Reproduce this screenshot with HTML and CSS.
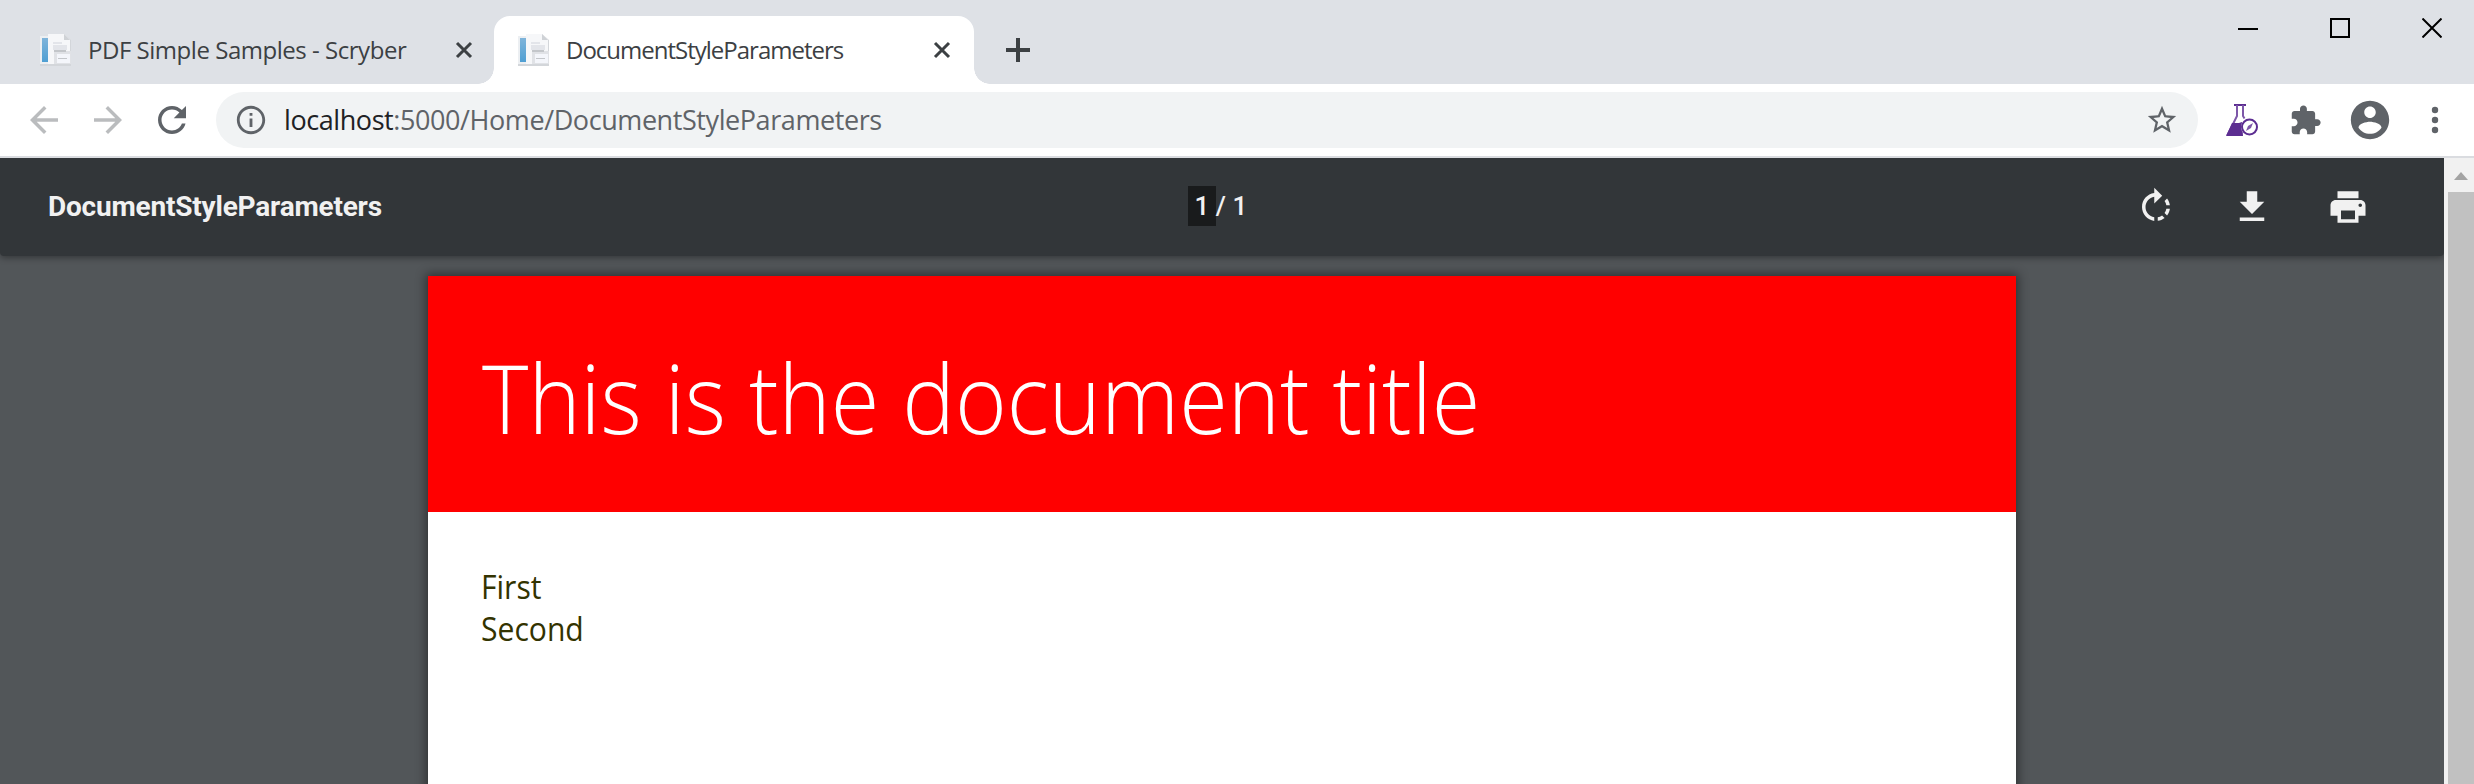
FILE: index.html
```
<!DOCTYPE html>
<html lang="en">
<head>
<meta charset="utf-8">
<title>DocumentStyleParameters</title>
<link rel="stylesheet" href="styles.css">
</head>
<body>
<svg width="0" height="0" class="defs">
  <defs>
    <linearGradient id="spine" x1="0" y1="0" x2="0" y2="1"><stop offset="0" stop-color="#7fb4da"/><stop offset="1" stop-color="#4f9fd3"/></linearGradient>
    <symbol id="favicon" viewBox="0 0 32 32">
      <path d="M0 2h8V0h16l7 6v26H0z" fill="#d3d6da"/>
      <path d="M0 2h8v28H0z" fill="#eceff2"/>
      <path d="M2 4h6v24H2z" fill="url(#spine)"/>
      <path d="M8 0h16l6 6v24H8z" fill="#f6f7f9"/>
      <path d="M24 0v6h6z" fill="#cfd2d6"/>
      <path d="M13 8h9v2h-9zM13 11h14v5H13z" fill="#e3e5ea"/>
      <path d="M14 17h17v13H14z" fill="#e0e2e6"/>
      <path d="M17 20h13v9H17z" fill="#f4f6fb"/>
      <path d="M14 16h12v2H14zM18 24h9v1h-9z" fill="#c3c6ca"/>
    </symbol>
  </defs>
</svg>
<header class="tabstrip">
  <div class="tab">
    <svg class="favicon"><use href="#favicon"/></svg>
    <span class="tab-title tab-title-first">PDF Simple Samples - Scryber</span>
    <svg class="tab-close" viewBox="0 0 18 18"><path d="M2 2l14 14M16 2L2 16"/></svg>
  </div>
  <div class="tab active">
    <svg class="favicon"><use href="#favicon"/></svg>
    <span class="tab-title tab-title-second">DocumentStyleParameters</span>
    <svg class="tab-close" viewBox="0 0 18 18"><path d="M2 2l14 14M16 2L2 16"/></svg>
  </div>
  <svg class="new-tab" viewBox="0 0 24 24"><path d="M12 0v24M0 12h24"/></svg>
  <div class="window-controls">
    <svg viewBox="0 0 20 20"><path d="M0 11h20"/></svg>
    <svg viewBox="0 0 20 20"><path d="M1 1h18v18H1z"/></svg>
    <svg viewBox="0 0 20 20"><path d="M.5.5l19 19M19.5.5l-19 19"/></svg>
  </div>
</header>
<nav class="toolbar">
  <div class="nav-buttons">
    <svg class="dim" viewBox="0 0 24 24"><path d="M20 11H7.830l5.590-5.590L12 4l-8 8 8 8 1.410-1.410L7.830 13H20v-2z"/></svg>
    <svg class="dim" viewBox="0 0 24 24"><path d="M12 4l-1.410 1.410L16.170 11H4v2h12.170l-5.580 5.590L12 20l8-8z"/></svg>
    <svg viewBox="0 0 24 24"><path d="M17.650 6.350C16.200 4.900 14.210 4 12 4c-4.420 0-7.990 3.580-7.990 8s3.570 8 7.990 8c3.730 0 6.840-2.550 7.730-6h-2.080c-.82 2.330-3.040 4-5.650 4-3.310 0-6-2.690-6-6s2.690-6 6-6c1.660 0 3.140.69 4.220 1.780L13 11h7V4l-2.350 2.350z"/></svg>
  </div>
  <div class="omnibox">
    <svg class="info" viewBox="0 0 24 24"><path d="M11 7h2v2h-2zm0 4h2v6h-2zm1-9C6.480 2 2 6.480 2 12s4.480 10 10 10 10-4.480 10-10S17.520 2 12 2zm0 18c-4.410 0-8-3.590-8-8s3.590-8 8-8 8 3.590 8 8-3.590 8-8 8z"/></svg>
    <span class="url"><span class="host">localhost</span>:5000/Home/DocumentStyleParameters</span>
    <svg class="star" viewBox="0 0 24 24"><path d="M22 9.240l-7.190-.62L12 2 9.190 8.630 2 9.240l5.460 4.730L5.820 21 12 17.270 18.180 21l-1.630-7.030L22 9.240zM12 15.400l-3.760 2.270 1-4.280-3.320-2.880 4.380-.38L12 6.100l1.710 4.040 4.380.38-3.320 2.880 1 4.280L12 15.400z"/></svg>
  </div>
  <div class="extensions">
    <svg class="flask" viewBox="0 0 32 32"><path d="M8 1h12" fill="none" stroke="#5c2d91" stroke-width="2"/><path d="M11 1v11L2 30h13M17 1v11l1.500 2.500" fill="none" stroke="#7d57a8" stroke-width="2"/><path d="M6 19h7l3-1 1 14H0z" fill="#5c2d91"/><circle cx="23.500" cy="23" r="8.500" fill="#fff"/><circle cx="23.500" cy="23" r="7.500" fill="#fff" stroke="#5c2d91" stroke-width="2"/><path d="M20 27l2-5 5-3-2 5z" fill="#7d57a8"/></svg>
    <svg class="puzzle" viewBox="0 0 24 24"><path d="M20.500 11H19V7c0-1.100-.9-2-2-2h-4V3.500C13 2.120 11.880 1 10.500 1S8 2.120 8 3.500V5H4c-1.100 0-1.990.9-1.990 2v3.800H3.500c1.490 0 2.700 1.210 2.700 2.700s-1.210 2.700-2.700 2.700H2V20c0 1.100.9 2 2 2h3.800v-1.500c0-1.490 1.210-2.700 2.700-2.700 1.490 0 2.700 1.210 2.700 2.700V22H17c1.100 0 2-.9 2-2v-4h1.500c1.380 0 2.500-1.120 2.500-2.500S21.880 11 20.500 11z"/></svg>
    <svg class="account" viewBox="0 0 24 24"><path d="M12 2C6.480 2 2 6.480 2 12s4.480 10 10 10 10-4.480 10-10S17.520 2 12 2zm0 3c1.660 0 3 1.340 3 3s-1.340 3-3 3-3-1.340-3-3 1.340-3 3-3zm0 14.200c-2.500 0-4.710-1.280-6-3.220.03-1.990 4-3.080 6-3.080 1.990 0 5.970 1.090 6 3.080-1.290 1.940-3.500 3.220-6 3.220z"/></svg>
    <svg class="menu" viewBox="0 0 8 28"><circle cx="4" cy="4" r="3.200"/><circle cx="4" cy="14" r="3.200"/><circle cx="4" cy="24" r="3.200"/></svg>
  </div>
</nav>
<main class="viewport">
  <section class="viewer">
    <div class="pdf-bar">
      <span class="pdf-name">DocumentStyleParameters</span>
      <div class="pager"><span class="page-current">1</span><span class="page-total">/ 1</span></div>
      <div class="pdf-actions">
        <svg viewBox="0 0 24 24"><path d="M15.550 5.550L11 1v3.070C7.060 4.560 4 7.920 4 12s3.050 7.440 7 7.930v-2.020c-2.840-.48-5-2.940-5-5.910s2.160-5.430 5-5.910V10l4.550-4.450zM19.930 11c-.17-1.390-.72-2.730-1.620-3.890l-1.420 1.420c.54.75.88 1.600 1.020 2.470h2.020zM13 17.900v2.020c1.390-.17 2.740-.71 3.900-1.610l-1.440-1.440c-.75.54-1.590.89-2.460 1.030zm3.890-2.420l1.420 1.410c.9-1.160 1.450-2.500 1.620-3.890h-2.020c-.14.87-.48 1.720-1.020 2.480z"/></svg>
        <svg viewBox="0 0 24 24"><path d="M19 9h-4V3H9v6H5l7 7 7-7zM5 18v2h14v-2H5z"/></svg>
        <svg viewBox="0 0 24 24"><path d="M19 8H5c-1.660 0-3 1.340-3 3v6h4v4h12v-4h4v-6c0-1.660-1.340-3-3-3zm-3 11H8v-5h8v5zm3-7c-.55 0-1-.45-1-1s.45-1 1-1 1 .45 1 1-.45 1-1 1zm-1-9H6v4h12V3z"/></svg>
      </div>
    </div>
    <article class="page">
      <h1 class="doc-title"><span>This is the document title</span></h1>
      <div class="doc-body"><p>First</p><p>Second</p></div>
    </article>
  </section>
  <aside class="scrollbar">
    <svg class="scroll-up" viewBox="0 0 14 8"><path d="M7 0l7 8H0z"/></svg>
    <div class="thumb"></div>
  </aside>
</main>
</body>
</html>
```
FILE: styles.css
```
* { box-sizing: border-box; }
body {
  margin: 0;
  width: 2474px;
  height: 784px;
  overflow: hidden;
  display: flex;
  flex-direction: column;
  font-family: "Open Sans", "Noto Sans", sans-serif;
  background: #fff;
}
svg { display: block; flex: none; }
.defs { position: absolute; }

.tabstrip {
  display: flex;
  align-items: flex-end;
  height: 84px;
  flex: none;
  background: #dee1e6;
}
.tab {
  position: relative;
  display: flex;
  align-items: center;
  width: 480px;
  height: 68px;
  padding: 0 21px 0 26px;
}
.tab:first-child { width: 494px; padding-left: 40px; }
.tab.active { background: #fff; border-radius: 16px 16px 0 0; padding: 0 23px 0 24px; }
.tab.active::before, .tab.active::after {
  content: "";
  position: absolute;
  bottom: 0;
  width: 16px;
  height: 16px;
}
.tab.active::before { left: -16px; background: radial-gradient(circle at 0 0, transparent 15.5px, #fff 16px); }
.tab.active::after { right: -16px; background: radial-gradient(circle at 100% 0, transparent 15.5px, #fff 16px); }
.favicon { width: 32px; height: 32px; }
.tab-title {
  flex: 1;
  margin-left: 16px;
  font-size: 24px;
  line-height: 32px;
  color: #3c4043;
  white-space: nowrap;
}
.tab-title-first { letter-spacing: -0.47px; }
.tab-title-second { letter-spacing: -1px; }
.tab-close { width: 18px; height: 18px; fill: none; stroke: #3c4043; stroke-width: 3; }
.new-tab { width: 24px; height: 24px; margin: 0 0 22px 32px; fill: none; stroke: #3c4043; stroke-width: 4; }
.window-controls {
  display: flex;
  gap: 72px;
  margin-left: auto;
  padding: 0 32px 46px 0;
}
.window-controls svg { width: 20px; height: 20px; fill: none; stroke: #000; stroke-width: 2; }

.toolbar {
  display: flex;
  align-items: center;
  height: 74px;
  flex: none;
  padding-left: 23px;
  border-bottom: 2px solid #dadce0;
}
.toolbar svg { fill: #5f6368; }
.nav-buttons { display: flex; gap: 22px; }
.nav-buttons svg { width: 42px; height: 42px; }
.nav-buttons .dim { fill: #babcbe; }
.omnibox {
  display: flex;
  align-items: center;
  width: 1982px;
  height: 56px;
  margin-left: 23px;
  padding: 0 19px 0 18px;
  border-radius: 28px;
  background: #f1f3f4;
}
.omnibox .info, .omnibox .star { width: 34px; height: 34px; }
.url {
  flex: 1;
  margin-left: 16px;
  font-size: 27px;
  line-height: 36px;
  letter-spacing: -0.42px;
  color: #5f6368;
}
.host { color: #202124; }
.extensions { display: flex; align-items: center; margin-left: 28px; }
.flask { width: 32px; height: 32px; }
.extensions .puzzle { width: 33px; height: 33px; margin-left: 31px; }
.extensions .account { width: 46px; height: 46px; margin-left: 25px; }
.extensions .menu { width: 8px; height: 28px; margin-left: 38px; }

.viewport { display: flex; flex: 1; min-height: 0; }
.viewer { flex: 1; overflow: hidden; background: #525659; }
.pdf-bar {
  display: grid;
  grid-template-columns: 1fr auto 1fr;
  align-items: center;
  height: 98px;
  padding: 0 57px 0 48px;
  background: #323639;
  border-radius: 0 0 4px 4px;
  box-shadow: 0 2px 6px rgba(0, 0, 0, .35);
  font-family: Roboto, sans-serif;
  font-size: 26px;
  font-weight: 500;
  line-height: 40px;
  color: #f1f1f1;
}
.pdf-name { font-size: 28px; font-weight: 700; letter-spacing: -0.2px; }
.pager { display: flex; margin-bottom: 2px; }
.page-current { width: 28px; height: 40px; text-align: center; background: #191b1c; }
.pdf-actions { display: flex; justify-content: flex-end; gap: 54px; margin-right: 18px; fill: #f1f1f1; }
.pdf-actions svg { width: 42px; height: 42px; }
.page {
  width: 1588px;
  height: 600px;
  margin: 20px 0 0 428px;
  background: #fff;
  box-shadow: 0 0 10px 2px rgba(0, 0, 0, .45);
}
.doc-title {
  display: flex;
  align-items: center;
  height: 236px;
  margin: 0;
  padding: 5px 0 0 54px;
  background: #f00;
  color: #fff;
  font-size: 95px;
  font-weight: 300;
  line-height: 130px;
  white-space: nowrap;
}
.doc-title span { transform: scaleX(.931); transform-origin: left; }
.doc-body { padding: 54px 53px; font-size: 32px; line-height: 42px; color: #333300; }
.doc-body p { margin: 0; transform: scaleX(.94); transform-origin: left; }

.scrollbar {
  display: flex;
  flex-direction: column;
  width: 30px;
  padding-left: 4px;
  background: #f1f1f1;
}
.scroll-up { width: 14px; height: 8px; margin: 14px 0 12px 6px; fill: #a3a3a3; }
.thumb { flex: 1; background: #c1c1c1; }
```
